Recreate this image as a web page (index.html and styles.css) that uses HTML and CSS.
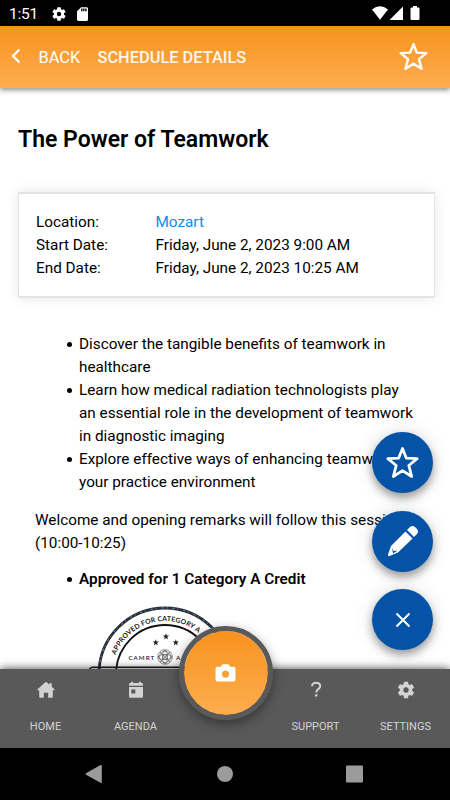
FILE: index.html
```html
<!DOCTYPE html>
<html lang="en">
<head>
<meta charset="utf-8">
<title>Schedule Details</title>
<link rel="stylesheet" href="styles.css">
</head>
<body>
<div class="app">
  <div class="status">
    <span class="clock">1:51</span>
    <svg class="s-gear" viewBox="2 2 20 20"><use href="#gear"/></svg>
    <svg class="s-card" viewBox="4 2 16 20"><path fill="#fff" fill-rule="evenodd" d="M18 2h-8L4 8v12c0 1.100.9 2 2 2h12c1.100 0 2-.9 2-2V4c0-1.100-.9-2-2-2zM10 8V4h2v4zM13 8V4h2v4zM16 8V4h2v4z"/></svg>
    <svg class="s-right" viewBox="0 0 50 16"><g fill="#fff"><path d="M0 3.400Q8-3 16 3.400L8 13.800z"/><path d="M17.500 14L31 .5V14z"/><path d="M38.500 2.500q0-1 1-1H41V0h4v1.500h1.500q1 0 1 1V13q0 1-1 1h-7q-1 0-1-1z"/></g></svg>
  </div>
  <header class="header">
    <svg class="chev" viewBox="0 0 10 16"><path d="M8.500 1.500L2 8l6.500 6.500"/></svg>
    <span class="back">BACK</span>
    <h1 class="title">SCHEDULE DETAILS</h1>
    <svg class="star" viewBox="0 0 30 30"><use href="#star"/></svg>
  </header>
  <main class="content">
    <h2 class="session">The Power of Teamwork</h2>
    <dl class="card">
      <dt>Location:</dt><dd class="link">Mozart</dd>
      <dt>Start Date:</dt><dd>Friday, June 2, 2023 9:00 AM</dd>
      <dt>End Date:</dt><dd>Friday, June 2, 2023 10:25 AM</dd>
    </dl>
    <div class="copy">
      <ul>
        <li>Discover the tangible benefits of teamwork in<br>healthcare</li>
        <li>Learn how medical radiation technologists play<br>an essential role in the development of teamwork<br>in diagnostic imaging</li>
        <li>Explore effective ways of enhancing teamwork in<br>your practice environment</li>
      </ul>
      <p>Welcome and opening remarks will follow this session<br>(10:00-10:25)</p>
      <ul class="approved"><li>Approved for 1 Category A Credit</li></ul>
      <svg class="stamp" viewBox="85 602 160 68">
        <defs><path id="arc" d="M112 674A53 53 0 0 1 218 674"/></defs>
        <g fill="none" stroke="#26313b">
          <circle cx="165" cy="674" r="66" stroke-width="2.800"/>
          <circle cx="165" cy="674" r="66.200" stroke="#8b9db0" stroke-width="1" stroke-dasharray="2 3 1 5"/>
          <circle cx="165" cy="674" r="49" stroke="#111" stroke-width="1.800"/>
        </g>
        <path d="M89.500 670q.5-2.800 3-2.800H245" fill="none" stroke="#222" stroke-width="1.600"/>
        <text class="arc-text"><textPath href="#arc" startOffset="19.500">APPROVED FOR CATEGORY A</textPath></text>
        <text class="camrt" x="128.500" y="659.500">CAMRT</text>
        <text class="camrt" x="176" y="659.500">A</text>
        <g fill="#222">
          <path id="mini" d="M166 633.300l.8 2.200 2.400.1-1.900 1.500.7 2.300-2-1.300-2 1.300.7-2.300-1.900-1.500 2.400-.1z"/>
          <use href="#mini" x="-10.200" y="6"/><use href="#mini" x="9.800" y="6"/>
        </g>
        <g fill="none" stroke="#444" stroke-width=".6">
          <circle cx="165" cy="657" r="7.300"/><circle cx="165" cy="657" r="5.500"/><circle cx="165" cy="657" r="2.200"/>
          <ellipse cx="165" cy="657" rx="2.600" ry="6.800"/><ellipse cx="165" cy="657" rx="6.800" ry="2.600"/>
          <path d="M160 652l10 10M170 652l-10 10"/>
        </g>
      </svg>
    </div>
  </main>
  <div class="fabs">
    <div class="fab"><svg class="fab-star" viewBox="0 0 30 30"><use href="#star"/></svg></div>
    <div class="fab"><svg class="fab-pencil" viewBox="0 0 32 32"><g fill="#fff"><path d="M18.500 6.500L25.500 13.500L11 27.500L2.500 31Q.6 31.600 1 29.500L4 21z"/><path d="M20 5l3-3q2.500-2 5 0l2 2q2 2.500 0 5l-3 3z"/></g><path fill="#0453a7" d="M5 22.500l1.500 3.500 4-.5-4.500 3z"/></svg></div>
    <div class="fab"><svg class="fab-x" viewBox="0 0 16 16"><path d="M1.500 1.500l13 13M14.500 1.500l-13 13"/></svg></div>
  </div>
  <nav class="nav">
    <div class="tab"><svg viewBox="0 0 18 18"><path d="M8.300 1.300Q9 .7 9.700 1.300L12.400 3.700V2.200h2.300v3.600L17.700 8.500Q18 9.200 17.300 9.200H15.800v6.300q0 1.200-1.200 1.200H11.200v-5H6.800v5H3.400q-1.200 0-1.200-1.200V9.200H.7Q0 9.200.3 8.500z"/></svg><span>HOME</span></div>
    <div class="tab"><svg viewBox="0 0 18 18"><path fill-rule="evenodd" d="M3.200 2H4V.8h2V2h6V.8h2V2h.8q1.200 0 1.200 1.200v1.600H2V3.200Q2 2 3.200 2zM2 6h14v9.500q0 1.200-1.200 1.200H3.200Q2 16.700 2 15.500zM4.300 8.500v4h4v-4z"/></svg><span>AGENDA</span></div>
    <div class="tab gap"></div>
    <div class="tab"><svg viewBox="0 0 18 18"><path class="q" d="M5 5.200C5 .3 13.300.7 13.200 5.300c0 2.700-4 3-4 6.200"/><rect x="8.100" y="13.200" width="2.300" height="2.300"/></svg><span>SUPPORT</span></div>
    <div class="tab"><svg viewBox="1.500 1.500 21 21"><use href="#gear"/></svg><span>SETTINGS</span></div>
    <div class="camera"><svg viewBox="0 0 21 18"><path fill="#fff" fill-rule="evenodd" d="M2.500 2.800H6L7 .8Q7.300.3 8 .3h5q.7 0 1 .5l1 2h3.500q2 0 2 2V15.500q0 2-2 2h-16q-2 0-2-2V4.800q0-2 2-2zM10.500 6.400a3.700 3.700 0 1 0 .01 0z"/></svg></div>
  </nav>
  <div class="system">
    <svg viewBox="0 0 450 52"><g fill="#9b9b9b"><path d="M86 25.200q-.8.800 0 1.500l14.500 8.100q1.300.6 1.300-.6V17.700q0-1.200-1.300-.6z"/><circle cx="225" cy="26" r="8"/><rect x="346" y="17.500" width="17" height="17" rx="1"/></g></svg>
  </div>
</div>
<svg class="defs"><defs>
  <path id="star" fill="none" stroke="#fff" stroke-width="2.500" stroke-linejoin="round" d="M15 2.200L18.400 11L28.300 11.500L20.700 17.700L23.300 27.700L15 22.400L6.700 27.700L9.300 17.700L1.700 11.500L11.600 11z"/>
  <path id="gear" d="M19.140 12.940c.04-.3.060-.61.060-.94s-.02-.64-.07-.94l2.030-1.580c.18-.14.23-.41.120-.61l-1.920-3.320c-.12-.22-.37-.29-.59-.22l-2.390.96c-.5-.38-1.030-.7-1.620-.94l-.36-2.540c-.04-.24-.24-.41-.48-.41h-3.840c-.24 0-.43.170-.47.410l-.36 2.540c-.59.240-1.130.57-1.620.94l-2.390-.96c-.22-.08-.47 0-.59.220L2.740 8.870c-.12.210-.08.470.12.610l2.030 1.580c-.05.300-.09.630-.09.940s.02.640.07.940l-2.030 1.580c-.18.140-.23.410-.12.610l1.920 3.320c.12.220.37.290.59.220l2.390-.96c.5.380 1.030.7 1.620.94l.36 2.540c.05.240.24.410.48.410h3.840c.24 0 .44-.17.470-.41l.36-2.540c.59-.24 1.130-.56 1.620-.94l2.390.96c.22.080.47 0 .59-.22l1.920-3.320c.12-.22.070-.47-.12-.61zM12 15.100A3.100 3.100 0 1 1 12 8.900a3.100 3.100 0 0 1 0 6.200z"/>
</defs></svg>
</body>
</html>
```
FILE: styles.css
```css
* { box-sizing: border-box; }
body { margin: 0; font-family: Roboto, sans-serif; color: #000; background: #fff; overflow: hidden; }
svg { display: block; flex: none; }
.defs { position: absolute; width: 0; height: 0; }
.app { position: relative; display: flex; flex-direction: column; width: 450px; height: 800px; overflow: hidden; }
.status { flex: none; height: 26px; background: #000; color: #fff; display: flex; align-items: center; padding: 1px 0 0 9px; }
.clock { width: 42.500px; font-size: 15.5px; letter-spacing: -.2px; }
.s-gear { width: 14px; height: 14px; fill: #fff; }
.s-card { width: 11px; height: 14px; margin-left: 11.500px; }
.s-right { width: 50px; height: 16px; margin-left: auto; margin-right: 28px; }
.header { position: relative; z-index: 2; flex: none; height: 62px; display: flex; align-items: center; padding-left: 11px; color: #fff; background: linear-gradient(#f7931e, #fdad50); box-shadow: 0 2px 5px rgba(0,0,0,.45); }
.chev { width: 10px; height: 16px; margin-bottom: 2px; fill: none; stroke: #fff; stroke-width: 2.200; }
.back { width: 59px; margin-left: 17.500px; font-size: 16.400px; }
.title { margin: 0; font-size: 16.400px; font-weight: 500; color: #fff6ea; white-space: nowrap; }
.star { width: 29px; height: 29px; margin-left: auto; margin-right: 22px; margin-bottom: 2px; }
.content { flex: 1; min-height: 0; overflow: hidden; padding: 37px 15px 0 18px; }
.session { margin: 0 0 38px; font-size: 23px; line-height: 29px; font-weight: 600; white-space: nowrap; }
.card { margin: 0; height: 106px; padding: 17px 17px 0; border: 1px solid #e4e4e4; border-width: 2px 1px 2px 1px; box-shadow: 0 0 12px rgba(0,0,0,.1); display: grid; grid-template-columns: 119.500px 1fr; grid-auto-rows: 23px; line-height: 23px; font-size: 15.300px; }
.card dd { margin: 0; white-space: nowrap; }
.card .link { color: #1289f5; }
.copy { padding: 35px 0 0 17px; font-size: 15.300px; line-height: 23px; white-space: nowrap; }
.copy ul { margin: 0; padding-left: 44px; list-style: none; }
.copy li::before { content: ""; display: inline-block; width: 5px; height: 5px; margin: 0 7px 0 -12px; vertical-align: 2px; border-radius: 50%; background: #000; }
.copy p { margin: 15px 0 13px; }
.copy .approved { font-weight: 600; }
.stamp { width: 160px; height: 68px; margin: 11px 0 0 50px; }
.arc-text { font: 700 6.800px Lato, sans-serif; letter-spacing: .2px; fill: #161616; }
.camrt { font: 600 6.200px Lato, sans-serif; letter-spacing: 1px; fill: #222; }
.fabs { position: absolute; left: 372px; top: 432px; display: grid; gap: 17.500px; }
.fab { width: 61px; height: 61px; border-radius: 50%; background: #0453a7; display: flex; align-items: center; justify-content: center; box-shadow: 0 5px 8px rgba(0,0,0,.35), 0 0 20px rgba(0,0,0,.12); }
.fab-star { width: 33px; height: 33px; }
.fab-pencil { width: 32px; height: 32px; }
.fab-x { width: 16px; height: 16px; fill: none; stroke: #fff; stroke-width: 2; }
.nav { position: relative; z-index: 3; flex: none; height: 79px; display: grid; grid-template-columns: repeat(5, 90px); background: #595959; box-shadow: 0 0 9px rgba(0,0,0,.75); }
.tab { display: flex; flex-direction: column; align-items: center; padding: 12px 0 0 1px; color: #d2d2d2; font-size: 11px; line-height: 16px; }
.tab svg { width: 18px; height: 18px; fill: #d2d2d2; }
.tab span { margin-top: 20px; }
.tab .q { fill: none; stroke: #d2d2d2; stroke-width: 2; }
.camera { position: absolute; left: 179px; top: -43px; width: 94px; height: 94px; border: 5px solid #595959; border-radius: 50%; background: linear-gradient(#f7931e, #fdad50) padding-box; display: flex; align-items: center; justify-content: center; box-shadow: 0 4px 12px rgba(0,0,0,.4); }
.camera svg { width: 21px; height: 18px; margin-right: 2px; }
.system { position: relative; z-index: 4; flex: none; height: 52px; background: #000; }
.system svg { width: 450px; height: 52px; }
```
